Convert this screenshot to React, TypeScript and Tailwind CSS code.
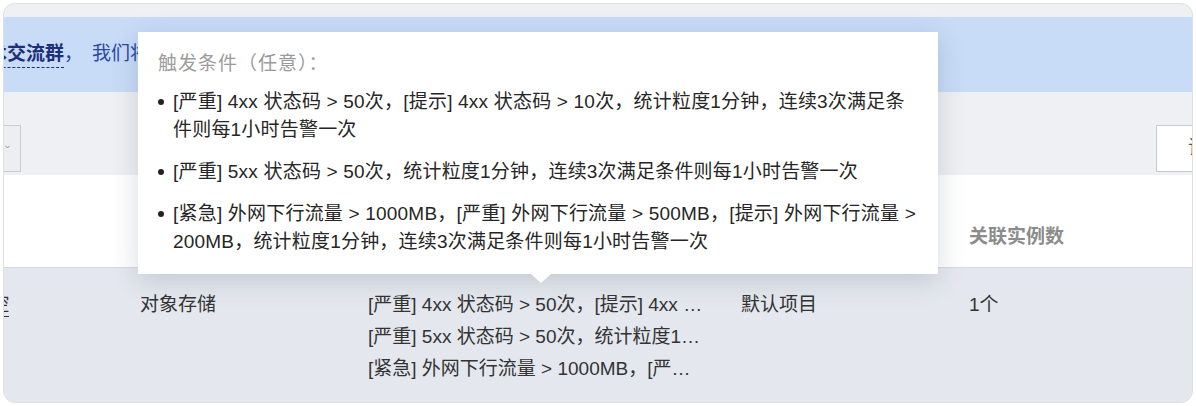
import React from "react";

const rules = [
  "[严重] 4xx 状态码 > 50次，[提示] 4xx 状态码 > 10次，统计粒度1分钟，连续3次满足条件则每1小时告警一次",
  "[严重] 5xx 状态码 > 50次，统计粒度1分钟，连续3次满足条件则每1小时告警一次",
  "[紧急] 外网下行流量 > 1000MB，[严重] 外网下行流量 > 500MB，[提示] 外网下行流量 > 200MB，统计粒度1分钟，连续3次满足条件则每1小时告警一次",
];

const shortRules = [
  "[严重] 4xx 状态码 > 50次，[提示] 4xx …",
  "[严重] 5xx 状态码 > 50次，统计粒度1…",
  "[紧急] 外网下行流量 > 1000MB，[严…",
];

export default function App() {
  return (
    <div className="w-[1196px] h-[406px] bg-white p-[3px] font-['Liberation_Sans','Noto_Sans_CJK_SC',sans-serif] text-[#333]">
      <div className="relative h-full rounded-[12px] border border-[#dedfe2] bg-[#eef0f3] overflow-hidden flex flex-col">
        {/* top strip */}
        <div className="h-[13px] shrink-0" />

        {/* notice banner */}
        <div className="h-[75px] shrink-0 bg-[#c8dcf8] flex items-center text-[19px] whitespace-nowrap overflow-hidden">
          <span className="ml-[-16px] font-bold text-[#1d2f78] border-b border-dashed border-[#1d2f78] leading-[26px]">
            术交流群
          </span>
          <span className="text-[#2a47a6]">，</span>
          <span className="ml-[9px] text-[#2a47a6]">我们将第一时间为您解答使用问题</span>
        </div>

        {/* toolbar */}
        <div className="h-[83px] shrink-0 bg-[#eff0f4] flex items-end justify-between pb-[3px]">
          <div className="ml-[-43px] w-[60px] h-[47px] border border-[#c6cbd4] bg-[#eceef2] flex items-center justify-end pr-[10px]">
            <svg width="5" height="4" viewBox="0 0 5 4" className="mt-[-3px]">
              <path d="M0.5 0.8 L2.5 3 L4.5 0.8" stroke="#8a8f99" strokeWidth="1" fill="none" />
            </svg>
          </div>
          <div className="w-[36px] h-[47px] border border-[#c6cbd4] border-r-0 bg-white flex items-center pl-[31px] overflow-hidden whitespace-nowrap text-[19px] text-[#555]">
            请输入名称
          </div>
        </div>

        {/* table header */}
        <div className="h-[93px] shrink-0 bg-white border-b border-[#d3d9e2] grid grid-cols-[116px_228px_373px_228px_1fr] items-end pb-[16px] text-[19px] leading-[28px] font-bold text-[#8c8c8c]">
          <div />
          <div />
          <div />
          <div />
          <div className="pl-5">关联实例数</div>
        </div>

        {/* table row */}
        <div className="flex-1 bg-[#e4e8ee] grid grid-cols-[116px_228px_373px_228px_1fr] items-start pt-[21px] text-[19px] leading-[32px]">
          <div className="overflow-hidden whitespace-nowrap">
            <span className="ml-[-33px] underline underline-offset-[5px] decoration-[#333]">监控</span>
          </div>
          <div className="pl-5">对象存储</div>
          <div className="pl-5 whitespace-nowrap">
            {shortRules.map((r) => (
              <div key={r}>{r}</div>
            ))}
          </div>
          <div className="pl-5">默认项目</div>
          <div className="pl-5">1个</div>
        </div>

        {/* tooltip */}
        <div className="absolute left-[134px] top-[28px] w-[800px] bg-white shadow-[0_6px_26px_rgba(40,50,70,0.18)] pt-[18px] pb-[18px] pl-5 pr-[19px] text-[19px] leading-[28px] tracking-[0.2px] text-[#262626]">
          <div className="text-[#9b9b9b] tracking-[1px]">触发条件（任意）：</div>
          <div className="mt-[10px] flex flex-col gap-[14px]">
            {rules.map((r) => (
              <div key={r} className="flex items-start">
                <span className="mt-[11px] w-[6px] h-[6px] rounded-full bg-[#222] shrink-0" />
                <span className="ml-[9px]">{r}</span>
              </div>
            ))}
          </div>
          <span className="absolute left-[393px] bottom-[-9px] w-0 h-0 border-l-[10px] border-r-[10px] border-t-[9px] border-l-transparent border-r-transparent border-t-white" />
        </div>
      </div>
    </div>
  );
}
